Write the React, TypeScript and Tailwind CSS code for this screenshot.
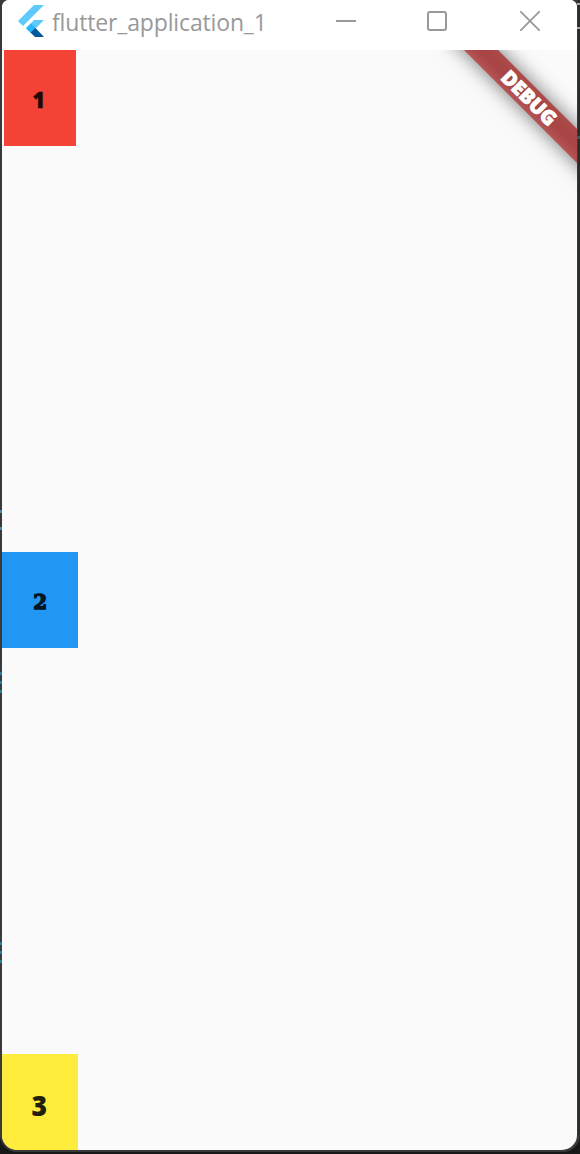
import React from "react";

function FlutterLogo() {
  return (
    <svg className="h-8 w-[26px] shrink-0" viewBox="0 0 26 32">
      <path fill="#5fcafa" d="M16 0H26L5 21L0 16ZM16 15H26L18 23L13 28L8 23Z" />
      <path fill="#29b6f6" d="M13 18.5L17.5 23L13 28L8 23.5Z" />
      <path fill="#01579b" d="M12.5 27.5L17.5 23L26 32H17Z" />
    </svg>
  );
}

function TitleBar() {
  return (
    <header className="flex h-[50px] shrink-0 items-start bg-white pl-4 text-[#999999]">
      <div className="mt-[5px] flex">
        <FlutterLogo />
      </div>
      <h1 className="ml-2 mt-[6px] w-[214px] whitespace-nowrap font-['Open_Sans',sans-serif] text-[23px] font-normal leading-8 tracking-[-0.15px]">
        flutter_application_1
      </h1>
      <svg className="ml-[70px] mt-[11px] h-5 w-5" viewBox="0 0 20 20" fill="none" stroke="currentColor" strokeWidth="2">
        <path d="M0 10H20" />
      </svg>
      <svg className="ml-[71px] mt-[11px] h-5 w-5" viewBox="0 0 20 20" fill="none" stroke="currentColor" strokeWidth="2">
        <rect x="1" y="1" width="18" height="18" rx="2" />
      </svg>
      <svg className="ml-[73px] mt-[11px] h-5 w-5" viewBox="0 0 20 20" fill="none" stroke="currentColor" strokeWidth="1.8">
        <path d="M0.3 0.3L19.7 19.7M19.7 0.3L0.3 19.7" />
      </svg>
    </header>
  );
}

function DebugBanner() {
  return (
    <div className="absolute left-[425px] top-[36px] flex h-6 w-[204px] rotate-45 items-center justify-center bg-[linear-gradient(180deg,#ad4a4a,#a84545_35%,#a84545_60%,#b65353)] font-['Open_Sans',sans-serif] text-[20px] font-extrabold leading-6 text-white shadow-[0_0_20px_rgba(0,0,0,0.55)]">
      <span className="tracking-[-0.1px] [-webkit-text-stroke:0.8px_white]">DEBUG</span>
    </div>
  );
}

export default function App() {
  return (
    <div className="flex h-[1154px] w-[580px] flex-col overflow-hidden bg-[#171717]">
      <div className="relative h-[1152px] w-[580px] rounded-b-[17px] bg-[#393939] pl-[2px]">
        <div className="absolute left-0 top-[510px] h-[3px] w-[2px] bg-[#4b8bad]" />
        <div className="absolute left-0 top-[527px] h-[3px] w-[2px] bg-[#4b8bad]" />
        <div className="absolute left-0 top-[666px] h-[27px] w-[2px] bg-[repeating-linear-gradient(180deg,#343f47_0px,#343f47_6px,#237e96_6px,#237e96_9px)]" />
        <div className="absolute left-0 top-[936px] h-[27px] w-[2px] bg-[repeating-linear-gradient(180deg,#343f47_0px,#343f47_6px,#237e96_6px,#237e96_9px)]" />
        <div className="absolute right-0 top-0 h-[1135px] w-[2px] bg-[#292b2b]" />
        <div className="absolute right-0 top-[3px] h-[2px] w-[3px] bg-[#aaaaaa]" />
        <div className="absolute right-0 top-[27px] h-[2px] w-[3px] bg-[#aaaaaa]" />
        <div className="absolute right-0 top-[136px] h-[3px] w-[3px] bg-[#315b66]" />
        <div className="flex h-[1150px] w-[575px] flex-col overflow-hidden rounded-b-[15px] rounded-tl-[7px] rounded-tr-[7px] bg-[#fafafa]">
          <TitleBar />
          <main className="relative flex flex-1 flex-col items-start justify-between overflow-hidden">
            <div className="ml-[2px] flex h-24 w-[72px] items-center justify-center bg-[#f44336] text-[#200907]">
              <span className="-translate-x-px translate-y-px scale-x-90 font-['Open_Sans',sans-serif] text-[23px] font-extrabold leading-none [-webkit-text-stroke:0.6px_currentColor]">1</span>
            </div>
            <div className="flex h-24 w-[76px] items-center justify-center bg-[#2196f3] text-[#051523]">
              <span className="translate-y-px scale-x-95 font-['DejaVu_Serif',serif] text-[21px] font-bold leading-none [-webkit-text-stroke:1.4px_currentColor]">2</span>
            </div>
            <div className="flex h-24 w-[76px] items-center justify-center bg-[#ffeb3b] text-[#222008]">
              <span className="-translate-x-px translate-y-[3px] scale-x-95 font-['Open_Sans',sans-serif] text-[28px] font-extrabold leading-none">3</span>
            </div>
            <DebugBanner />
          </main>
        </div>
      </div>
    </div>
  );
}
